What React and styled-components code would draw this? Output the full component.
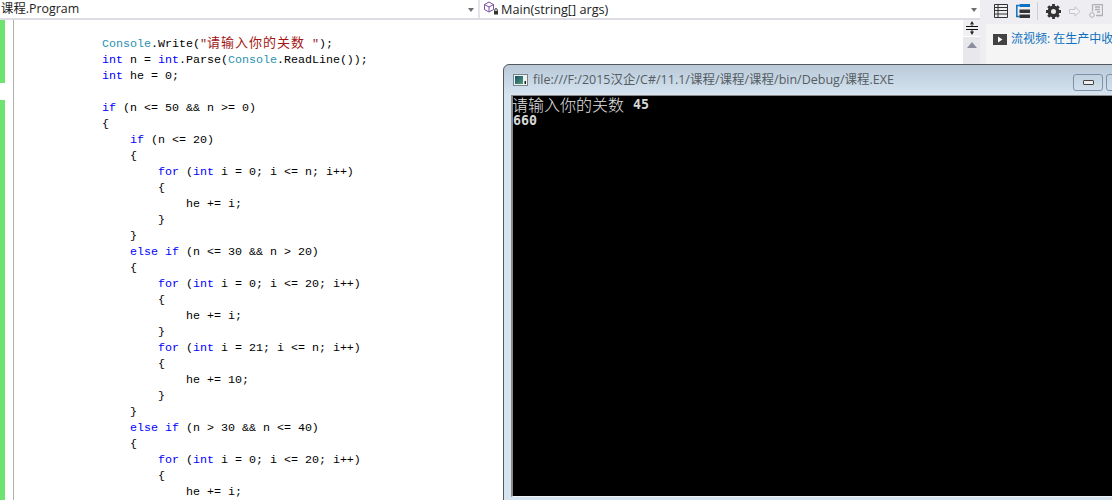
import React from "react";
import styled, { createGlobalStyle } from "styled-components";

const Global = createGlobalStyle`
  html, body { margin: 0; padding: 0; background: #fff; overflow: hidden; }
`;

const UI_FONT = `"Open Sans", "Noto Sans CJK SC", sans-serif`;
const CODE_FONT = `"Liberation Mono", "Noto Sans CJK SC", monospace`;

const Page = styled.div`
  position: relative;
  width: 1112px;
  height: 500px;
  overflow: hidden;
  display: flex;
  background: #eeeef2;
`;

const Editor = styled.div`
  width: 980px;
  display: flex;
  flex-direction: column;
  flex: none;
`;

const NavBar = styled.div`
  height: 18px;
  display: flex;
  background: #fff;
  border-bottom: 2px solid #dcdce4;
  flex: none;
`;

const NavCell = styled.div`
  position: relative;
  flex: ${(p) => (p.$grow ? 1 : "none")};
  width: ${(p) => (p.$grow ? "auto" : "480px")};
  display: flex;
  align-items: center;
  gap: 1px;
  padding-left: ${(p) => p.$pad}px;
  font: ${(p) => (p.$grow ? "12.7px" : "12.4px")}/18px ${UI_FONT};
  color: #222;
  border-right: ${(p) => (p.$grow ? "none" : "2px solid #e4e4ea")};
  box-sizing: border-box;
`;

const Caret = styled.span`
  position: absolute;
  right: ${(p) => p.$right}px;
  top: 8px;
  border: 3px solid transparent;
  border-top: 4px solid #6d6d76;
  border-bottom: 0;
`;

const CodeBody = styled.div`
  flex: 1;
  display: flex;
  min-height: 0;
  background: #fff;
`;

const Margin = styled.div`
  width: 13px;
  flex: none;
  border-right: 1px solid #b0b0b0;
`;

const Changed = styled.div`
  width: 5px;
  height: ${(p) => p.$h}px;
  margin-bottom: ${(p) => p.$gap || 0}px;
  background: #6fe36f;
`;

const Code = styled.pre`
  flex: 1;
  margin: 0;
  padding: 16px 0 0 88px;
  overflow: hidden;
  font: 11.67px/16px ${CODE_FONT};
  color: #000;
`;

const Kw = styled.span`color: #0000ff;`;
const Type = styled.span`color: #2b91af;`;
const Str = styled.span`color: #a31515;`;

// the CJK in the editor sits on a double width cell, 14px each
const CodeCjk = styled.span`
  font-size: 13px;
  letter-spacing: 1px;
`;

const ScrollBar = styled.div`
  width: 17px;
  flex: none;
  background: #e8e8ec;
  display: flex;
  flex-direction: column;
  align-items: center;
`;

const Splitter = styled.div`
  width: 17px;
  height: 16px;
  background: #f0f0f3;
  border-bottom: 1px solid #fff;
  display: flex;
  align-items: center;
  justify-content: center;
`;

const ArrowUp = styled.div`
  margin-top: 5px;
  border: 5px solid transparent;
  border-top: 0;
  border-bottom: 6px solid #8c8ea0;
`;

const Side = styled.div`
  flex: 1;
  display: flex;
  flex-direction: column;
  padding-left: 6px;
  background: #eeeef2;
`;

const Toolbar = styled.div`
  height: 24px;
  display: flex;
  align-items: center;
  padding: 0 0 2px 8px;
  box-sizing: border-box;
  gap: 8px;
`;

const ToolSep = styled.div`
  width: 1px;
  height: 18px;
  background: #ccced6;
  margin-left: -1px;
`;

const Notice = styled.div`
  flex: 1;
  background: #f5f5f5;
  display: flex;
  align-items: flex-start;
  padding: 7px 0 0 7px;
  gap: 4px;
  font: 12px/16px ${UI_FONT};
  color: #0e70c0;
  white-space: nowrap;
`;

const ConsoleWindow = styled.div`
  position: absolute;
  left: 503px;
  top: 64px;
  width: 640px;
  height: 450px;
  box-sizing: border-box;
  border: 1px solid #55585c;
  border-radius: 6px 6px 0 0;
  background: linear-gradient(#b9c9d8, #d6e4f0 30px);
  padding: 0 0 0 7px;
`;

const TitleBar = styled.div`
  height: 30px;
  display: flex;
  align-items: center;
  gap: 5px;
  padding-left: 2px;
  font: 12.5px/30px ${UI_FONT};
  color: #555c63;
  white-space: nowrap;
  position: relative;
`;

const MinButton = styled.div`
  position: absolute;
  left: 562px;
  top: 9px;
  width: 30px;
  height: 17px;
  box-sizing: border-box;
  border: 1px solid #8090a8;
  border-radius: 3px;
  display: flex;
  align-items: center;
  justify-content: center;
  &::after {
    content: "";
    width: 9px;
    height: 3px;
    background: #eee;
    border: 1px solid #444;
    border-radius: 1px;
  }
`;

const MaxButton = styled(MinButton)`
  left: 595px;
`;

const Screen = styled.div`
  height: 402px;
  box-sizing: border-box;
  background: #000;
  color: #d6d6d6;
  border-top: 1px solid #8a8a8a;
  border-left: 2px solid #8a8a8a;
  border-bottom: 1px solid #f0f4f8;
  font: bold 13.3px/15px "DejaVu Sans Mono", monospace;
`;

const ScreenLine = styled.div`
  display: flex;
  align-items: center;
  gap: 8px;
  height: 15px;
  padding-top: 1px;
  color: #d6d6d6;
`;

const Cjk = styled.span`
  margin: 0 1px 0 -1px;
  font: 16px/15px "Noto Sans CJK SC", sans-serif;
  font-weight: 300;
  color: #e0e0e0;
`;

const ClassIcon = () => (
  <svg width="17" height="16" viewBox="0 0 17 16" style={{ marginLeft: 1 }}>
    <path d="M6 1l4.500 2.500v5L6 11 1.500 8.500v-5z M1.500 3.500L6 6l4.500-2.500 M6 6v5" fill="none" stroke="#7a4ea8" strokeWidth="1" />
    <rect x="11" y="10" width="4" height="3.500" fill="#333" />
    <path d="M11.800 10V8.800a1.200 1.200 0 0 1 2.400 0V10" fill="none" stroke="#333" />
  </svg>
);

const ListIcon = () => (
  <svg width="14" height="14" viewBox="0 0 14 14">
    <path d="M.5 .5h13v13H.5z M.5 3.500h13 M.5 6.500h13 M.5 10h13 M4 .5v13" fill="none" stroke="#333" />
  </svg>
);

const TreeIcon = () => (
  <svg width="14" height="14" viewBox="0 0 14 14">
    <path d="M3.500 1.500H.8v11h2.700" fill="none" stroke="#0e70c0" strokeWidth="1.500" />
    <rect x="3.500" y="0" width="10.500" height="3" fill="#0e70c0" />
    <rect x="3.500" y="5.500" width="10.500" height="3.500" fill="#333" />
    <rect x="3.500" y="10.500" width="10.500" height="3.500" fill="#333" />
  </svg>
);

const GearIcon = () => (
  <svg width="15" height="15" viewBox="0 0 15 15">
    <circle cx="7.500" cy="7.500" r="4.200" fill="none" stroke="#333" strokeWidth="3.400" />
    <path d="M7.500 0v15 M0 7.500h15 M2.200 2.200l10.600 10.600 M12.800 2.200L2.200 12.800" stroke="#333" strokeWidth="2.800" strokeDasharray="3 9" />
  </svg>
);

const ForwardIcon = () => (
  <svg width="12" height="11" viewBox="0 0 12 11">
    <path d="M.5 3.500h5.500V.8L11 5.500 6 10.200V7.500H.5z" fill="#f2f2f4" stroke="#c4c4c8" />
  </svg>
);

const PagesIcon = () => (
  <svg width="14" height="14" viewBox="0 0 14 14">
    <path d="M3.500 .5h10v11H7 M3.500 .5v7 M6 3h5 M6 5.500h5 M8 8h3" fill="none" stroke="#b0b0b4" strokeWidth="1.300" />
    <circle cx="3" cy="11" r="2.300" fill="none" stroke="#b0b0b4" />
  </svg>
);

const VideoIcon = () => (
  <svg width="14" height="11" viewBox="0 0 14 11" style={{ marginTop: 3 }}>
    <rect width="14" height="11" fill="#424242" />
    <path d="M5 2.500l4.500 3-4.500 3z" fill="#fff" />
  </svg>
);

const SplitIcon = () => (
  <svg width="12" height="14" viewBox="0 0 12 14">
    <path d="M0 5.500h12 M0 8.500h12" stroke="#111" />
    <path d="M6 0L4 3.500h4z M6 14L4 10.500h4z M5.500 3h1v2h-1z M5.500 9h1v2h-1z" fill="#222" />
  </svg>
);

const ConsoleIcon = () => (
  <svg width="15" height="12" viewBox="0 0 15 12">
    <defs>
      <linearGradient id="consoleFill" x1="0" y1="0" x2="1" y2="1">
        <stop offset="0" stopColor="#17506e" />
        <stop offset="1" stopColor="#4f9c70" />
      </linearGradient>
    </defs>
    <rect x=".5" y=".5" width="14" height="11" fill="#f1f1f1" stroke="#78838d" />
    <rect x="2" y="2" width="8" height="8" fill="url(#consoleFill)" />
    <rect x="11.500" y="7" width="1.500" height="3" fill="#222" />
  </svg>
);

export default function App() {
  return (
    <Page>
      <Global />
      <Editor>
        <NavBar>
          <NavCell $pad={1}>
            课程.Program
            <Caret $right={4} />
          </NavCell>
          <NavCell $grow $pad={2}>
            <ClassIcon />
            Main(string[] args)
            <Caret $right={3} />
          </NavCell>
        </NavBar>
        <CodeBody>
          <Margin>
            <Changed $h={63} $gap={17} />
            <Changed $h={420} />
          </Margin>
          <Code>
            <Type>Console</Type>.Write(<Str>"<CodeCjk>请输入你的关数</CodeCjk> "</Str>);{"\n"}
            <Kw>int</Kw> n = <Kw>int</Kw>.Parse(<Type>Console</Type>.ReadLine());{"\n"}
            <Kw>int</Kw> he = 0;{"\n"}
            {"\n"}
            <Kw>if</Kw> (n &lt;= 50 &amp;&amp; n &gt;= 0){"\n"}
            {"{\n"}
            {"    "}<Kw>if</Kw> (n &lt;= 20){"\n"}
            {"    {\n"}
            {"        "}<Kw>for</Kw> (<Kw>int</Kw> i = 0; i &lt;= n; i++){"\n"}
            {"        {\n"}
            {"            he += i;\n"}
            {"        }\n"}
            {"    }\n"}
            {"    "}<Kw>else</Kw> <Kw>if</Kw> (n &lt;= 30 &amp;&amp; n &gt; 20){"\n"}
            {"    {\n"}
            {"        "}<Kw>for</Kw> (<Kw>int</Kw> i = 0; i &lt;= 20; i++){"\n"}
            {"        {\n"}
            {"            he += i;\n"}
            {"        }\n"}
            {"        "}<Kw>for</Kw> (<Kw>int</Kw> i = 21; i &lt;= n; i++){"\n"}
            {"        {\n"}
            {"            he += 10;\n"}
            {"        }\n"}
            {"    }\n"}
            {"    "}<Kw>else</Kw> <Kw>if</Kw> (n &gt; 30 &amp;&amp; n &lt;= 40){"\n"}
            {"    {\n"}
            {"        "}<Kw>for</Kw> (<Kw>int</Kw> i = 0; i &lt;= 20; i++){"\n"}
            {"        {\n"}
            {"            he += i;\n"}
          </Code>
          <ScrollBar>
            <Splitter><SplitIcon /></Splitter>
            <ArrowUp />
          </ScrollBar>
        </CodeBody>
      </Editor>
      <Side>
        <Toolbar>
          <ListIcon />
          <TreeIcon />
          <ToolSep />
          <GearIcon />
          <ForwardIcon />
          <PagesIcon />
        </Toolbar>
        <Notice>
          <VideoIcon />
          流视频: 在生产中收集数据
        </Notice>
      </Side>
      <ConsoleWindow>
        <TitleBar>
          <ConsoleIcon />
          file:///F:/2015汉企/C#/11.1/课程/课程/课程/bin/Debug/课程.EXE
          <MinButton />
          <MaxButton />
        </TitleBar>
        <Screen>
          <ScreenLine><Cjk>请输入你的关数</Cjk>45</ScreenLine>
          <ScreenLine>660</ScreenLine>
        </Screen>
      </ConsoleWindow>
    </Page>
  );
}
